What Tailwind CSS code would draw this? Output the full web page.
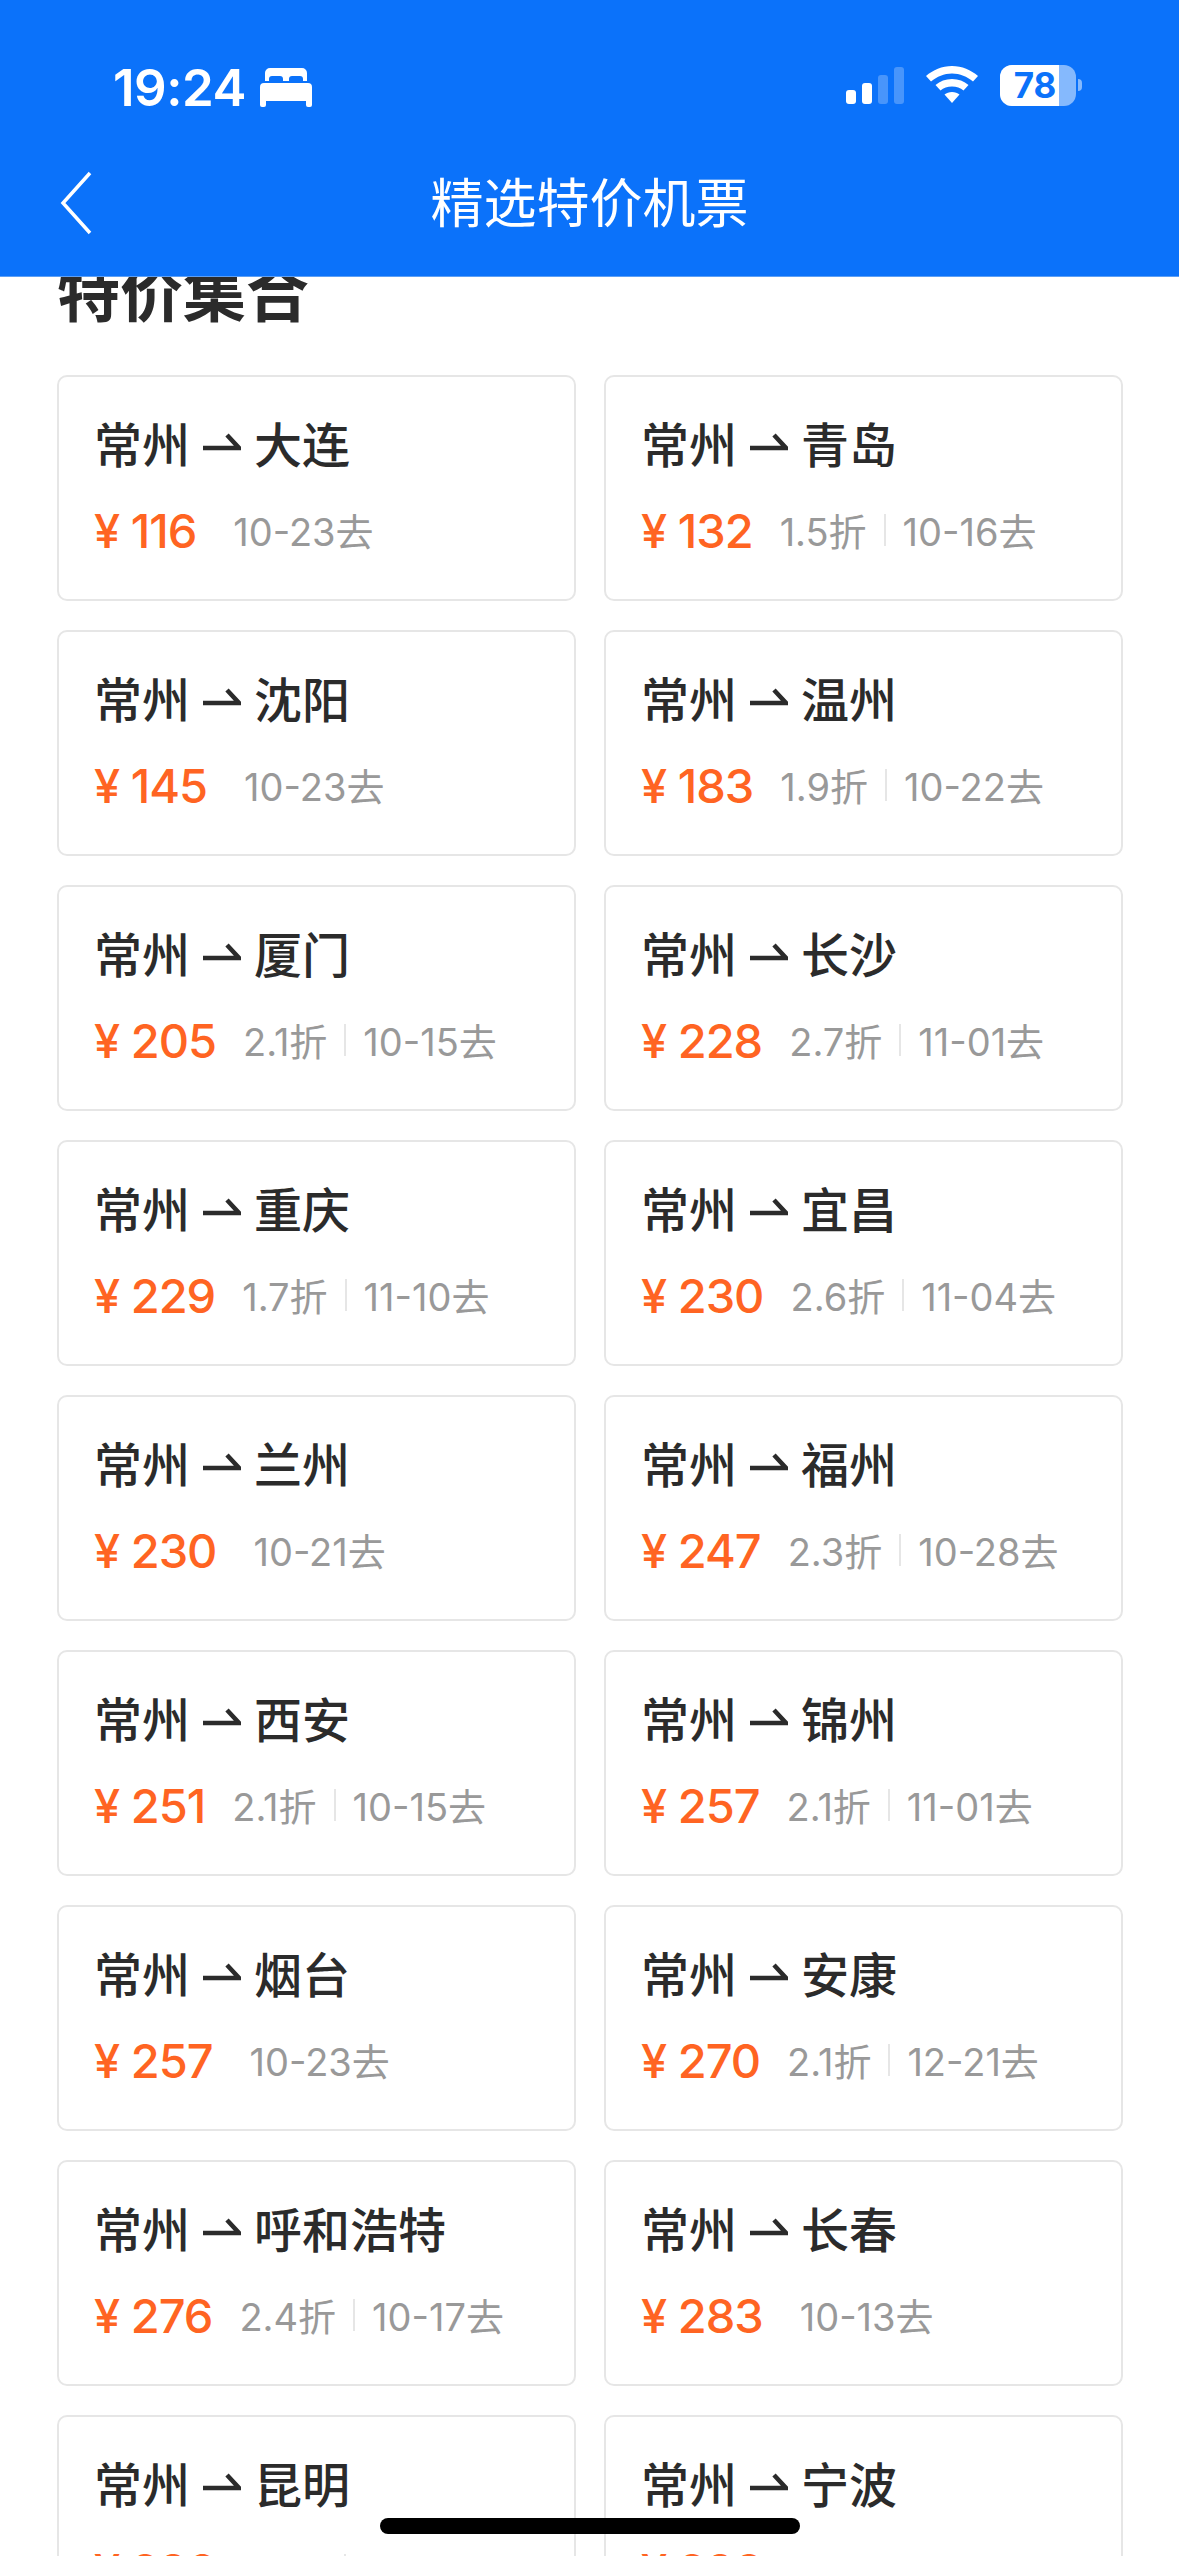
<!DOCTYPE html>
<html lang="zh">
<head>
<meta charset="utf-8">
<script src="https://cdn.jsdelivr.net/npm/@tailwindcss/browser@4"></script>
</head>
<body class="bg-white">
<div class="relative w-[1179px] h-[2556px] overflow-hidden bg-white font-['Inter','Noto_Sans_CJK_SC',sans-serif]">
  <header class="h-[277px] bg-[#0b72fa] border-b border-b-[#5c9ff5] text-white">
    <div class="h-[157px] pl-[113px] pr-[97px] pt-[56px] flex justify-between items-start">
      <div class="flex items-center gap-[14px] h-[62px]">
        <span class="text-[51px] font-semibold tracking-[-0.5px] leading-none">19:24</span>
        <svg width="52" height="40" viewBox="0 0 52 40" class="fill-white"><path d="M5 14V6a5 5 0 0 1 5-5h32a5 5 0 0 1 5 5v8h-4v-2a3 3 0 0 0-3-3H32a3 3 0 0 0-3 3v2h-6v-2a3 3 0 0 0-3-3H12a3 3 0 0 0-3 3v2z"/><path d="M4 16h44a4 4 0 0 1 4 4v18a2 2 0 0 1-2 2h-2a2 2 0 0 1-2-2v-4H6v4a2 2 0 0 1-2 2H2a2 2 0 0 1-2-2V20a4 4 0 0 1 4-4z"/></svg>
      </div>
      <div class="flex items-center h-[62px] mt-[-2px]">
        <div class="flex items-end gap-[6px] h-[38px]">
          <span class="w-[10px] h-[14px] rounded-[3px] bg-white"></span>
          <span class="w-[10px] h-[21px] rounded-[3px] bg-white"></span>
          <span class="w-[10px] h-[29px] rounded-[3px] bg-white/25"></span>
          <span class="w-[10px] h-[37px] rounded-[3px] bg-white/25"></span>
        </div>
        <svg width="52" height="38" viewBox="0 0 52 38" class="ml-[22px] fill-white"><path d="M26 0c10 0 19 4 26 10l-5 5.500C41 10.500 34 7.500 26 7.500S11 10.500 5 15.500L0 10C7 4 16 0 26 0z"/><path d="M26 13c6.500 0 12 2.300 16.500 6l-5 5.500c-3-2.500-7-4-11.500-4s-8.500 1.500-11.500 4l-5-5.500C14 15.300 19.500 13 26 13z"/><path d="M26 26c3 0 5.500 1 7.500 2.500L26 37l-7.500-8.500C20.500 27 23 26 26 26z"/></svg>
        <div class="ml-[22px] relative w-[76px] h-[41px] rounded-[12px] overflow-hidden bg-white/50">
          <div class="absolute left-0 top-0 h-full w-[59px] bg-white"></div>
          <span class="absolute inset-0 pr-[6px] flex items-center justify-center text-[35px] font-bold text-[#0b72fa] leading-none">78</span>
        </div>
        <span class="ml-[2px] w-[4px] h-[12px] rounded-r-full bg-white/50"></span>
      </div>
    </div>
    <div class="relative h-[119px] flex items-start justify-center pt-[8px]">
      <svg width="32" height="64" viewBox="0 0 32 64" class="absolute left-[60px] top-[14px] stroke-white fill-none"><path d="M30 2 3 32l27 30" stroke-width="3.500"/></svg>
      <span class="text-[53px] leading-[70px] font-normal font-['Noto_Sans_CJK_SC',sans-serif]">精选特价机票</span>
    </div>
  </header>

  <main class="px-[57px] overflow-hidden">
    <h2 class="mt-[-28px] h-[126px] text-[63px] leading-[80px] font-bold text-[#2b2b2b] font-['Noto_Sans_CJK_SC',sans-serif]">特价集合</h2>
    <div class="grid grid-cols-[519px_519px] gap-x-[28px] gap-y-[29px]">

      <div class="h-[226px] rounded-[10px] border-2 border-[#e6e6e6] pl-[35px] pt-[30px]"><div class="flex items-center h-[70px] text-[48px] font-medium text-[#2b2b2b] leading-none font-['Noto_Sans_CJK_SC',sans-serif]"><span>常州</span><svg width="38" height="22" viewBox="0 0 38 22" class="ml-[13px] mr-[13px] mt-[2px] stroke-[#2b2b2b] fill-none"><path d="M0 16h36L24 3" stroke-width="4.500"/></svg><span>大连</span></div><div class="flex items-center mt-[23px] h-[60px]"><span class="text-[47px] font-medium text-[#ff6422] leading-none tracking-[-1px]">¥ 116</span><span class="ml-[37px] mt-[3px] text-[38px] text-[#999999] leading-none">10-23去</span></div></div>

      <div class="h-[226px] rounded-[10px] border-2 border-[#e6e6e6] pl-[35px] pt-[30px]"><div class="flex items-center h-[70px] text-[48px] font-medium text-[#2b2b2b] leading-none font-['Noto_Sans_CJK_SC',sans-serif]"><span>常州</span><svg width="38" height="22" viewBox="0 0 38 22" class="ml-[13px] mr-[13px] mt-[2px] stroke-[#2b2b2b] fill-none"><path d="M0 16h36L24 3" stroke-width="4.500"/></svg><span>青岛</span></div><div class="flex items-center mt-[23px] h-[60px]"><span class="text-[47px] font-medium text-[#ff6422] leading-none tracking-[-1px]">¥ 132</span><span class="ml-[27px] mt-[3px] text-[38px] text-[#999999] leading-none">1.5折</span><span class="mx-[17px] w-[2px] h-[32px] bg-[#e6e6e6]"></span><span class="mt-[3px] text-[38px] text-[#999999] leading-none">10-16去</span></div></div>

      <div class="h-[226px] rounded-[10px] border-2 border-[#e6e6e6] pl-[35px] pt-[30px]"><div class="flex items-center h-[70px] text-[48px] font-medium text-[#2b2b2b] leading-none font-['Noto_Sans_CJK_SC',sans-serif]"><span>常州</span><svg width="38" height="22" viewBox="0 0 38 22" class="ml-[13px] mr-[13px] mt-[2px] stroke-[#2b2b2b] fill-none"><path d="M0 16h36L24 3" stroke-width="4.500"/></svg><span>沈阳</span></div><div class="flex items-center mt-[23px] h-[60px]"><span class="text-[47px] font-medium text-[#ff6422] leading-none tracking-[-1px]">¥ 145</span><span class="ml-[37px] mt-[3px] text-[38px] text-[#999999] leading-none">10-23去</span></div></div>

      <div class="h-[226px] rounded-[10px] border-2 border-[#e6e6e6] pl-[35px] pt-[30px]"><div class="flex items-center h-[70px] text-[48px] font-medium text-[#2b2b2b] leading-none font-['Noto_Sans_CJK_SC',sans-serif]"><span>常州</span><svg width="38" height="22" viewBox="0 0 38 22" class="ml-[13px] mr-[13px] mt-[2px] stroke-[#2b2b2b] fill-none"><path d="M0 16h36L24 3" stroke-width="4.500"/></svg><span>温州</span></div><div class="flex items-center mt-[23px] h-[60px]"><span class="text-[47px] font-medium text-[#ff6422] leading-none tracking-[-1px]">¥ 183</span><span class="ml-[27px] mt-[3px] text-[38px] text-[#999999] leading-none">1.9折</span><span class="mx-[17px] w-[2px] h-[32px] bg-[#e6e6e6]"></span><span class="mt-[3px] text-[38px] text-[#999999] leading-none">10-22去</span></div></div>

      <div class="h-[226px] rounded-[10px] border-2 border-[#e6e6e6] pl-[35px] pt-[30px]"><div class="flex items-center h-[70px] text-[48px] font-medium text-[#2b2b2b] leading-none font-['Noto_Sans_CJK_SC',sans-serif]"><span>常州</span><svg width="38" height="22" viewBox="0 0 38 22" class="ml-[13px] mr-[13px] mt-[2px] stroke-[#2b2b2b] fill-none"><path d="M0 16h36L24 3" stroke-width="4.500"/></svg><span>厦门</span></div><div class="flex items-center mt-[23px] h-[60px]"><span class="text-[47px] font-medium text-[#ff6422] leading-none tracking-[-1px]">¥ 205</span><span class="ml-[27px] mt-[3px] text-[38px] text-[#999999] leading-none">2.1折</span><span class="mx-[17px] w-[2px] h-[32px] bg-[#e6e6e6]"></span><span class="mt-[3px] text-[38px] text-[#999999] leading-none">10-15去</span></div></div>

      <div class="h-[226px] rounded-[10px] border-2 border-[#e6e6e6] pl-[35px] pt-[30px]"><div class="flex items-center h-[70px] text-[48px] font-medium text-[#2b2b2b] leading-none font-['Noto_Sans_CJK_SC',sans-serif]"><span>常州</span><svg width="38" height="22" viewBox="0 0 38 22" class="ml-[13px] mr-[13px] mt-[2px] stroke-[#2b2b2b] fill-none"><path d="M0 16h36L24 3" stroke-width="4.500"/></svg><span>长沙</span></div><div class="flex items-center mt-[23px] h-[60px]"><span class="text-[47px] font-medium text-[#ff6422] leading-none tracking-[-1px]">¥ 228</span><span class="ml-[27px] mt-[3px] text-[38px] text-[#999999] leading-none">2.7折</span><span class="mx-[17px] w-[2px] h-[32px] bg-[#e6e6e6]"></span><span class="mt-[3px] text-[38px] text-[#999999] leading-none">11-01去</span></div></div>

      <div class="h-[226px] rounded-[10px] border-2 border-[#e6e6e6] pl-[35px] pt-[30px]"><div class="flex items-center h-[70px] text-[48px] font-medium text-[#2b2b2b] leading-none font-['Noto_Sans_CJK_SC',sans-serif]"><span>常州</span><svg width="38" height="22" viewBox="0 0 38 22" class="ml-[13px] mr-[13px] mt-[2px] stroke-[#2b2b2b] fill-none"><path d="M0 16h36L24 3" stroke-width="4.500"/></svg><span>重庆</span></div><div class="flex items-center mt-[23px] h-[60px]"><span class="text-[47px] font-medium text-[#ff6422] leading-none tracking-[-1px]">¥ 229</span><span class="ml-[27px] mt-[3px] text-[38px] text-[#999999] leading-none">1.7折</span><span class="mx-[17px] w-[2px] h-[32px] bg-[#e6e6e6]"></span><span class="mt-[3px] text-[38px] text-[#999999] leading-none">11-10去</span></div></div>

      <div class="h-[226px] rounded-[10px] border-2 border-[#e6e6e6] pl-[35px] pt-[30px]"><div class="flex items-center h-[70px] text-[48px] font-medium text-[#2b2b2b] leading-none font-['Noto_Sans_CJK_SC',sans-serif]"><span>常州</span><svg width="38" height="22" viewBox="0 0 38 22" class="ml-[13px] mr-[13px] mt-[2px] stroke-[#2b2b2b] fill-none"><path d="M0 16h36L24 3" stroke-width="4.500"/></svg><span>宜昌</span></div><div class="flex items-center mt-[23px] h-[60px]"><span class="text-[47px] font-medium text-[#ff6422] leading-none tracking-[-1px]">¥ 230</span><span class="ml-[27px] mt-[3px] text-[38px] text-[#999999] leading-none">2.6折</span><span class="mx-[17px] w-[2px] h-[32px] bg-[#e6e6e6]"></span><span class="mt-[3px] text-[38px] text-[#999999] leading-none">11-04去</span></div></div>

      <div class="h-[226px] rounded-[10px] border-2 border-[#e6e6e6] pl-[35px] pt-[30px]"><div class="flex items-center h-[70px] text-[48px] font-medium text-[#2b2b2b] leading-none font-['Noto_Sans_CJK_SC',sans-serif]"><span>常州</span><svg width="38" height="22" viewBox="0 0 38 22" class="ml-[13px] mr-[13px] mt-[2px] stroke-[#2b2b2b] fill-none"><path d="M0 16h36L24 3" stroke-width="4.500"/></svg><span>兰州</span></div><div class="flex items-center mt-[23px] h-[60px]"><span class="text-[47px] font-medium text-[#ff6422] leading-none tracking-[-1px]">¥ 230</span><span class="ml-[37px] mt-[3px] text-[38px] text-[#999999] leading-none">10-21去</span></div></div>

      <div class="h-[226px] rounded-[10px] border-2 border-[#e6e6e6] pl-[35px] pt-[30px]"><div class="flex items-center h-[70px] text-[48px] font-medium text-[#2b2b2b] leading-none font-['Noto_Sans_CJK_SC',sans-serif]"><span>常州</span><svg width="38" height="22" viewBox="0 0 38 22" class="ml-[13px] mr-[13px] mt-[2px] stroke-[#2b2b2b] fill-none"><path d="M0 16h36L24 3" stroke-width="4.500"/></svg><span>福州</span></div><div class="flex items-center mt-[23px] h-[60px]"><span class="text-[47px] font-medium text-[#ff6422] leading-none tracking-[-1px]">¥ 247</span><span class="ml-[27px] mt-[3px] text-[38px] text-[#999999] leading-none">2.3折</span><span class="mx-[17px] w-[2px] h-[32px] bg-[#e6e6e6]"></span><span class="mt-[3px] text-[38px] text-[#999999] leading-none">10-28去</span></div></div>

      <div class="h-[226px] rounded-[10px] border-2 border-[#e6e6e6] pl-[35px] pt-[30px]"><div class="flex items-center h-[70px] text-[48px] font-medium text-[#2b2b2b] leading-none font-['Noto_Sans_CJK_SC',sans-serif]"><span>常州</span><svg width="38" height="22" viewBox="0 0 38 22" class="ml-[13px] mr-[13px] mt-[2px] stroke-[#2b2b2b] fill-none"><path d="M0 16h36L24 3" stroke-width="4.500"/></svg><span>西安</span></div><div class="flex items-center mt-[23px] h-[60px]"><span class="text-[47px] font-medium text-[#ff6422] leading-none tracking-[-1px]">¥ 251</span><span class="ml-[27px] mt-[3px] text-[38px] text-[#999999] leading-none">2.1折</span><span class="mx-[17px] w-[2px] h-[32px] bg-[#e6e6e6]"></span><span class="mt-[3px] text-[38px] text-[#999999] leading-none">10-15去</span></div></div>

      <div class="h-[226px] rounded-[10px] border-2 border-[#e6e6e6] pl-[35px] pt-[30px]"><div class="flex items-center h-[70px] text-[48px] font-medium text-[#2b2b2b] leading-none font-['Noto_Sans_CJK_SC',sans-serif]"><span>常州</span><svg width="38" height="22" viewBox="0 0 38 22" class="ml-[13px] mr-[13px] mt-[2px] stroke-[#2b2b2b] fill-none"><path d="M0 16h36L24 3" stroke-width="4.500"/></svg><span>锦州</span></div><div class="flex items-center mt-[23px] h-[60px]"><span class="text-[47px] font-medium text-[#ff6422] leading-none tracking-[-1px]">¥ 257</span><span class="ml-[27px] mt-[3px] text-[38px] text-[#999999] leading-none">2.1折</span><span class="mx-[17px] w-[2px] h-[32px] bg-[#e6e6e6]"></span><span class="mt-[3px] text-[38px] text-[#999999] leading-none">11-01去</span></div></div>

      <div class="h-[226px] rounded-[10px] border-2 border-[#e6e6e6] pl-[35px] pt-[30px]"><div class="flex items-center h-[70px] text-[48px] font-medium text-[#2b2b2b] leading-none font-['Noto_Sans_CJK_SC',sans-serif]"><span>常州</span><svg width="38" height="22" viewBox="0 0 38 22" class="ml-[13px] mr-[13px] mt-[2px] stroke-[#2b2b2b] fill-none"><path d="M0 16h36L24 3" stroke-width="4.500"/></svg><span>烟台</span></div><div class="flex items-center mt-[23px] h-[60px]"><span class="text-[47px] font-medium text-[#ff6422] leading-none tracking-[-1px]">¥ 257</span><span class="ml-[37px] mt-[3px] text-[38px] text-[#999999] leading-none">10-23去</span></div></div>

      <div class="h-[226px] rounded-[10px] border-2 border-[#e6e6e6] pl-[35px] pt-[30px]"><div class="flex items-center h-[70px] text-[48px] font-medium text-[#2b2b2b] leading-none font-['Noto_Sans_CJK_SC',sans-serif]"><span>常州</span><svg width="38" height="22" viewBox="0 0 38 22" class="ml-[13px] mr-[13px] mt-[2px] stroke-[#2b2b2b] fill-none"><path d="M0 16h36L24 3" stroke-width="4.500"/></svg><span>安康</span></div><div class="flex items-center mt-[23px] h-[60px]"><span class="text-[47px] font-medium text-[#ff6422] leading-none tracking-[-1px]">¥ 270</span><span class="ml-[27px] mt-[3px] text-[38px] text-[#999999] leading-none">2.1折</span><span class="mx-[17px] w-[2px] h-[32px] bg-[#e6e6e6]"></span><span class="mt-[3px] text-[38px] text-[#999999] leading-none">12-21去</span></div></div>

      <div class="h-[226px] rounded-[10px] border-2 border-[#e6e6e6] pl-[35px] pt-[30px]"><div class="flex items-center h-[70px] text-[48px] font-medium text-[#2b2b2b] leading-none font-['Noto_Sans_CJK_SC',sans-serif]"><span>常州</span><svg width="38" height="22" viewBox="0 0 38 22" class="ml-[13px] mr-[13px] mt-[2px] stroke-[#2b2b2b] fill-none"><path d="M0 16h36L24 3" stroke-width="4.500"/></svg><span>呼和浩特</span></div><div class="flex items-center mt-[23px] h-[60px]"><span class="text-[47px] font-medium text-[#ff6422] leading-none tracking-[-1px]">¥ 276</span><span class="ml-[27px] mt-[3px] text-[38px] text-[#999999] leading-none">2.4折</span><span class="mx-[17px] w-[2px] h-[32px] bg-[#e6e6e6]"></span><span class="mt-[3px] text-[38px] text-[#999999] leading-none">10-17去</span></div></div>

      <div class="h-[226px] rounded-[10px] border-2 border-[#e6e6e6] pl-[35px] pt-[30px]"><div class="flex items-center h-[70px] text-[48px] font-medium text-[#2b2b2b] leading-none font-['Noto_Sans_CJK_SC',sans-serif]"><span>常州</span><svg width="38" height="22" viewBox="0 0 38 22" class="ml-[13px] mr-[13px] mt-[2px] stroke-[#2b2b2b] fill-none"><path d="M0 16h36L24 3" stroke-width="4.500"/></svg><span>长春</span></div><div class="flex items-center mt-[23px] h-[60px]"><span class="text-[47px] font-medium text-[#ff6422] leading-none tracking-[-1px]">¥ 283</span><span class="ml-[37px] mt-[3px] text-[38px] text-[#999999] leading-none">10-13去</span></div></div>

      <div class="h-[226px] rounded-[10px] border-2 border-[#e6e6e6] pl-[35px] pt-[30px]"><div class="flex items-center h-[70px] text-[48px] font-medium text-[#2b2b2b] leading-none font-['Noto_Sans_CJK_SC',sans-serif]"><span>常州</span><svg width="38" height="22" viewBox="0 0 38 22" class="ml-[13px] mr-[13px] mt-[2px] stroke-[#2b2b2b] fill-none"><path d="M0 16h36L24 3" stroke-width="4.500"/></svg><span>昆明</span></div><div class="flex items-center mt-[23px] h-[60px]"><span class="text-[47px] font-medium text-[#ff6422] leading-none tracking-[-1px]">¥ 290</span><span class="ml-[127px] w-[2px] h-[32px] bg-[#e6e6e6]"></span></div></div>

      <div class="h-[226px] rounded-[10px] border-2 border-[#e6e6e6] pl-[35px] pt-[30px]"><div class="flex items-center h-[70px] text-[48px] font-medium text-[#2b2b2b] leading-none font-['Noto_Sans_CJK_SC',sans-serif]"><span>常州</span><svg width="38" height="22" viewBox="0 0 38 22" class="ml-[13px] mr-[13px] mt-[2px] stroke-[#2b2b2b] fill-none"><path d="M0 16h36L24 3" stroke-width="4.500"/></svg><span>宁波</span></div><div class="flex items-center mt-[23px] h-[60px]"><span class="text-[47px] font-medium text-[#ff6422] leading-none tracking-[-1px]">¥ 293</span></div></div>

    </div>
  </main>
  <div class="absolute left-[380px] top-[2518px] w-[420px] h-[16px] rounded-full bg-black"></div>
</div>
</body>
</html>
